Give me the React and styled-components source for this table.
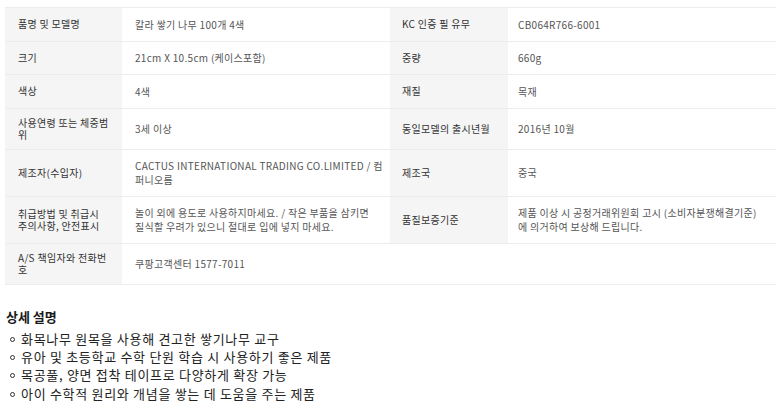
import { createGlobalStyle, styled } from "styled-components"

const GlobalStyle = createGlobalStyle`
  body {
    margin: 0;
    background: #fff;
    font-family: "Noto Sans CJK KR", "Noto Sans", sans-serif;
  }
`

const rows = [
  ["품명 및 모델명", "칼라 쌓기 나무 100개 4색", "KC 인증 필 유무", "CB064R766-6001"],
  ["크기", "21cm X 10.5cm (케이스포함)", "중량", "660g"],
  ["색상", "4색", "재질", "목재"],
  ["사용연령 또는 체중범\n위", "3세 이상", "동일모델의 출시년월", "2016년 10월"],
  ["제조자(수입자)", "CACTUS INTERNATIONAL TRADING CO.LIMITED / 컴\n퍼니오름", "제조국", "중국"],
  [
    "취급방법 및 취급시\n주의사항, 안전표시",
    "놀이 외에 용도로 사용하지마세요. / 작은 부품을 삼키면\n질식할 우려가 있으니 절대로 입에 넣지 마세요.",
    "품질보증기준",
    "제품 이상 시 공정거래위원회 고시 (소비자분쟁해결기준)\n에 의거하여 보상해 드립니다.",
  ],
  ["A/S 책임자와 전화번\n호", "쿠팡고객센터 1577-7011"],
]

const bullets = [
  "화목나무 원목을 사용해 견고한 쌓기나무 교구",
  "유아 및 초등학교 수학 단원 학습 시 사용하기 좋은 제품",
  "목공풀, 양면 접착 테이프로 다양하게 확장 가능",
  "아이 수학적 원리와 개념을 쌓는 데 도움을 주는 제품",
]

const App = () => {
  return (
    <Wrapper>
      <GlobalStyle />
      <Table>
        <colgroup>
          <col style={{ width: 117 }} />
          <col style={{ width: 268 }} />
          <col style={{ width: 118 }} />
          <col style={{ width: 268 }} />
        </colgroup>
        <tbody>
          {rows.map((r, i) => (
            <tr key={i}>
              <Label>{r[0]}</Label>
              <Value>{r[1]}</Value>
              {r.length > 2 ? (
                <>
                  <Label $right>{r[2]}</Label>
                  <Value $right>{r[3]}</Value>
                </>
              ) : (
                <Value colSpan={2} />
              )}
            </tr>
          ))}
        </tbody>
      </Table>

      <Title>상세 설명</Title>
      <List>
        {bullets.map((b) => (
          <li key={b}>{b}</li>
        ))}
      </List>
    </Wrapper>
  )
}

const Wrapper = styled.div`
  width: 779px;
  padding: 7px 3px 0 5px;
  box-sizing: border-box;
`

const Table = styled.table`
  width: 771px;
  table-layout: fixed;
  border-collapse: collapse;
  border-top: 1px solid #ececec;
  font-size: 10px;
  letter-spacing: 0.3px;

  tr {
    border-bottom: 1px solid #ececec;
  }
`

const Label = styled.td`
  background: #f5f5f5;
  color: #333;
  padding: 8px 6px 8px ${(p) => (p.$right ? "12px" : "13px")};
  line-height: 12px;
  white-space: pre;
  vertical-align: middle;
`

const Value = styled.td`
  color: #555;
  padding: 9.5px 6px 9.5px ${(p) => (p.$right ? "10px" : "13px")};
  line-height: 13.5px;
  white-space: pre;
  vertical-align: middle;
`

const Title = styled.h3`
  margin: 24px 0 0 1px;
  font-size: 13px;
  line-height: 16px;
  font-weight: bold;
  color: #1a1a1a;
`

const List = styled.ul`
  list-style: none;
  margin: 5px 0 0;
  padding: 0 0 0 16px;
  font-size: 13px;
  letter-spacing: 0.7px;
  line-height: 18.4px;
  color: #222;

  li {
    position: relative;
  }

  li::before {
    content: "";
    position: absolute;
    left: -11px;
    top: 7px;
    width: 3px;
    height: 3px;
    border: 1px solid #333;
    border-radius: 50%;
  }
`

export default App
